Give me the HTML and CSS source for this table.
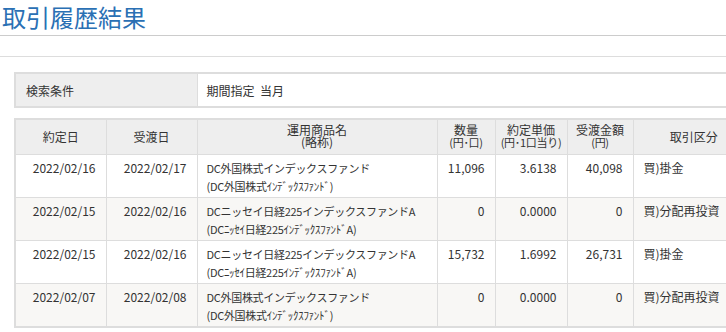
FILE: index.html
```html
<!DOCTYPE html>
<html lang="ja">
<head>
<meta charset="utf-8">
<link rel="stylesheet" href="styles.css">
</head>
<body>
<h1 class="title">取引履歴結果</h1>
<div class="band"></div>
<div class="content">
  <table class="cond">
    <colgroup><col class="c-label"><col></colgroup>
    <tr><th>検索条件</th><td>期間指定&nbsp;&nbsp;当月</td></tr>
  </table>
  <table class="hist">
    <colgroup>
      <col class="w1"><col class="w2"><col class="w3"><col class="w4"><col class="w5"><col class="w6"><col class="w7">
    </colgroup>
    <thead>
      <tr>
        <th>約定日</th>
        <th>受渡日</th>
        <th class="two"><span class="ln">運用商品名</span><span class="ln">(略称)</span></th>
        <th class="two"><span class="ln">数量</span><span class="ln sub">(円･口)</span></th>
        <th class="two"><span class="ln">約定単価</span><span class="ln sub">(円･1口当り)</span></th>
        <th class="two"><span class="ln">受渡金額</span><span class="ln sub">(円)</span></th>
        <th>取引区分</th>
      </tr>
    </thead>
    <tbody>
      <tr>
        <td class="r">2022/02/16</td><td class="r">2022/02/17</td>
        <td class="name">DC外国株式インデックスファンド<br>(DC外国株式ｲﾝﾃﾞｯｸｽﾌｧﾝﾄﾞ)</td>
        <td class="r">11,096</td><td class="r">3.6138</td><td class="r">40,098</td><td>買)掛金</td>
      </tr>
      <tr class="alt">
        <td class="r">2022/02/15</td><td class="r">2022/02/16</td>
        <td class="name">DCニッセイ日経225インデックスファンドA<br>(DCﾆｯｾｲ日経225ｲﾝﾃﾞｯｸｽﾌｧﾝﾄﾞA)</td>
        <td class="r">0</td><td class="r">0.0000</td><td class="r">0</td><td>買)分配再投資</td>
      </tr>
      <tr>
        <td class="r">2022/02/15</td><td class="r">2022/02/16</td>
        <td class="name">DCニッセイ日経225インデックスファンドA<br>(DCﾆｯｾｲ日経225ｲﾝﾃﾞｯｸｽﾌｧﾝﾄﾞA)</td>
        <td class="r">15,732</td><td class="r">1.6992</td><td class="r">26,731</td><td>買)掛金</td>
      </tr>
      <tr class="alt">
        <td class="r">2022/02/07</td><td class="r">2022/02/08</td>
        <td class="name">DC外国株式インデックスファンド<br>(DC外国株式ｲﾝﾃﾞｯｸｽﾌｧﾝﾄﾞ)</td>
        <td class="r">0</td><td class="r">0.0000</td><td class="r">0</td><td>買)分配再投資</td>
      </tr>
    </tbody>
  </table>
</div>
</body>
</html>
```

FILE: styles.css
```css
html, body {
  margin: 0;
  padding: 0;
  overflow: hidden;
  background: #ffffff;
}
body {
  font-family: "Noto Sans CJK JP", "Noto Sans", sans-serif;
  font-size: 12px;
  color: #333333;
  width: 726px;
}
.title {
  margin: 0;
  padding: 0 0 0 2px;
  font-size: 24px;
  line-height: 34px;
  font-weight: 400;
  color: #2a70b4;
  border-bottom: 1px solid #cccccc;
  box-sizing: border-box;
  height: 36px;
}
.band {
  height: 20px;
  border-bottom: 1px solid #dddddd;
}
.content {
  padding: 15px 0 0 14px;
  width: 760px;
}
table {
  border-collapse: collapse;
  table-layout: fixed;
}
.cond {
  width: 740px;
  border: 2px solid #dddddd;
  margin-bottom: 10px;
}
.cond .c-label { width: 182px; }
.cond th, .cond td {
  height: 32px;
  padding: 0 0 0 10px;
  text-align: left;
  font-weight: 400;
  border: 1px solid #dddddd;
}
.cond th { background: #eeeeee; }
.cond td { background: #ffffff; padding-left: 9px; }

.hist {
  width: 740px;
  border: 2px solid #dddddd;
}
.w1 { width: 91px; }
.w2 { width: 91px; }
.w3 { width: 240px; }
.w4 { width: 58px; }
.w5 { width: 72px; }
.w6 { width: 66px; }
.w7 { width: 122px; }
.hist th {
  background: #eeeeee;
  font-weight: 400;
  height: 31px;
  padding: 0;
  text-align: center;
  border: 1px solid #dddddd;
  line-height: 14px;
}
.hist th.two { padding-bottom: 3px; }
.hist th .ln { display: block; line-height: 12px; height: 12px; }
.hist th .sub { font-size: 11px; letter-spacing: -0.3px; }
.hist td {
  border: 1px solid #dddddd;
  vertical-align: top;
  line-height: 18px;
  padding: 4px 10px 2px 10px;
  white-space: nowrap;
  overflow: hidden;
  background: #ffffff;
}
.hist td.name { font-size: 11px; letter-spacing: -0.3px; padding-left: 9px; }
.hist tr.alt td { background: #f8f7f5; }
.hist td.r { text-align: right; }
```
